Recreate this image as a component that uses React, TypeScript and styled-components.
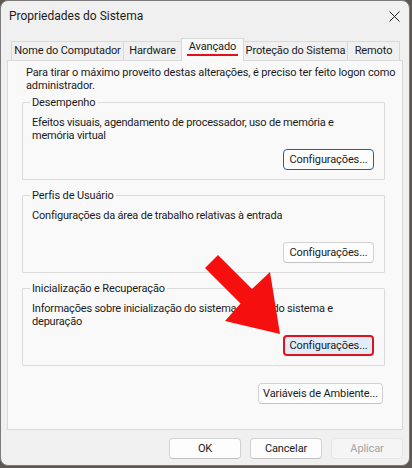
import styled, { createGlobalStyle } from 'styled-components'

const GlobalStyle = createGlobalStyle`
	html, body {
		margin: 0;
		padding: 0;
	}
	body {
		width: 412px;
		height: 468px;
		overflow: hidden;
		background: #5d5853;
		font-family: Roboto, 'Liberation Sans', sans-serif;
		font-size: 11px;
		letter-spacing: -0.12px;
		color: #1b1b1b;
	}
`

const Window = styled.div`
	position: relative;
	width: 410px;
	height: 466px;
	box-sizing: border-box;
	border: 1px solid #7b7b7b;
	border-radius: 8px;
	background: #f0f0f0;
	display: flex;
	flex-direction: column;
	overflow: hidden;
`

const TitleBar = styled.div`
	height: 30px;
	flex-shrink: 0;
	display: flex;
	align-items: center;
	justify-content: space-between;
	padding: 0 9px 0 8px;
`

const Title = styled.span`
	font-size: 12px;
	letter-spacing: 0;
	line-height: 14px;
`

const TabStrip = styled.div`
	height: 30px;
	flex-shrink: 0;
	display: flex;
	align-items: flex-end;
	padding-left: 11px;
	margin-bottom: -1px;
	position: relative;
	z-index: 1;
`

const Tab = styled.div<{ $w: number; $active?: boolean }>`
	width: ${(p) => p.$w}px;
	height: ${(p) => (p.$active ? 23 : 20)}px;
	box-sizing: border-box;
	margin-left: -1px;
	border: 1px solid #d9d9d9;
	border-bottom: ${(p) => (p.$active ? 'none' : '1px solid #d9d9d9')};
	background: ${(p) => (p.$active ? '#f9f9f9' : '#f0f0f0')};
	position: relative;
	z-index: ${(p) => (p.$active ? 2 : 1)};
	display: flex;
	justify-content: center;
	align-items: flex-start;
	padding-top: ${(p) => (p.$active ? 1 : 2)}px;
	line-height: 13px;
	white-space: nowrap;
`

const TabLabel = styled.span<{ $active?: boolean }>`
	display: inline-block;
	line-height: 13px;
	padding: 0 2px 1px;
	border-bottom: 2px solid ${(p) => (p.$active ? '#e3101c' : 'transparent')};
`

const Panel = styled.div`
	margin: 0 6px;
	height: 370px;
	flex-shrink: 0;
	box-sizing: border-box;
	border: 1px solid #d9d9d9;
	background: #f9f9f9;
	padding: 5px 17px 0 14px;
	display: flex;
	flex-direction: column;
`

const Intro = styled.p`
	margin: 0 -12px 0 0;
	padding-left: 4px;
	line-height: 13px;
`

const Group = styled.fieldset<{ $first?: boolean }>`
	margin: ${(p) => (p.$first ? 4 : 9)}px 0 0;
	padding: 0 10px 9px 9px;
	min-width: 0;
	border: 1px solid #dcdcdc;
	border-radius: 1px;
`

const Legend = styled.legend`
	padding: 0 2px;
	margin-left: -2px;
	line-height: 13px;
`

const Description = styled.p`
	margin: 7px 0 0;
	max-width: 330px;
	min-height: 26px;
	line-height: 13px;
	letter-spacing: -0.2px;
`

const ButtonRow = styled.div<{ $top: number; $right?: number }>`
	display: flex;
	justify-content: flex-end;
	margin-top: ${(p) => p.$top}px;
	padding-right: ${(p) => p.$right ?? 0}px;
`

type Variant = 'normal' | 'focus' | 'marked' | 'disabled'

const Button = styled.button<{ $w: number; $variant?: Variant }>`
	width: ${(p) => p.$w}px;
	height: 21px;
	box-sizing: border-box;
	padding: 0;
	border-radius: 4px;
	font-family: inherit;
	font-size: 11px;
	letter-spacing: inherit;
	line-height: 13px;
	white-space: nowrap;
	cursor: default;
	color: ${(p) => (p.$variant === 'disabled' ? '#a3a3a3' : '#1b1b1b')};
	background: ${(p) =>
		p.$variant === 'marked' ? '#e1eefa' : p.$variant === 'disabled' ? '#f5f5f5' : '#fdfdfd'};
	border: ${(p) =>
		p.$variant === 'focus'
			? '1px solid #24609c'
			: p.$variant === 'marked'
				? '2px solid #e0121e'
				: p.$variant === 'disabled'
					? '1px solid #e6e6e6'
					: '1px solid #d2d2d2'};
	border-bottom-color: ${(p) =>
		p.$variant === 'normal' || !p.$variant ? '#c2c2c2' : undefined};
`

const Footer = styled.div`
	display: flex;
	justify-content: flex-end;
	gap: 9px;
	padding: 8px 6px 0;
`

const Arrow = styled.svg`
	position: absolute;
	left: -1px;
	top: -1px;
	pointer-events: none;
	z-index: 5;
`

const CloseIcon = () => (
	<svg width="11" height="11" viewBox="0 0 11 11">
		<path d="M0.5 0.5 L10.5 10.5 M10.5 0.5 L0.5 10.5" stroke="#222" strokeWidth="1" fill="none" />
	</svg>
)

const tabs = [
	{ label: 'Nome do Computador', w: 113 },
	{ label: 'Hardware', w: 59 },
	{ label: 'Avançado', w: 63, active: true },
	{ label: 'Proteção do Sistema', w: 105 },
	{ label: 'Remoto', w: 53 },
]

export default function App() {
	return (
		<>
			<GlobalStyle />
			<Window>
				<TitleBar>
					<Title>Propriedades do Sistema</Title>
					<CloseIcon />
				</TitleBar>

				<TabStrip>
					{tabs.map((t) => (
						<Tab key={t.label} $w={t.w} $active={t.active}>
							<TabLabel $active={t.active}>{t.label}</TabLabel>
						</Tab>
					))}
				</TabStrip>

				<Panel>
					<Intro>
						Para tirar o máximo proveito destas alterações, é preciso ter feito logon como administrador.
					</Intro>

					<Group $first>
						<Legend>Desempenho</Legend>
						<Description>
							Efeitos visuais, agendamento de processador, uso de memória e memória virtual
						</Description>
						<ButtonRow $top={7}>
							<Button $w={91} $variant="focus">Configurações...</Button>
						</ButtonRow>
					</Group>

					<Group>
						<Legend>Perfis de Usuário</Legend>
						<Description>Configurações da área de trabalho relativas à entrada</Description>
						<ButtonRow $top={7}>
							<Button $w={91}>Configurações...</Button>
						</ButtonRow>
					</Group>

					<Group>
						<Legend>Inicialização e Recuperação</Legend>
						<Description>
							Informações sobre inicialização do sistema, falhas do sistema e depuração
						</Description>
						<ButtonRow $top={7}>
							<Button $w={91} $variant="marked">Configurações...</Button>
						</ButtonRow>
					</Group>

					<ButtonRow $top={17} $right={2}>
						<Button $w={125}>Variáveis de Ambiente...</Button>
					</ButtonRow>
				</Panel>

				<Footer>
					<Button $w={72}>OK</Button>
					<Button $w={72}>Cancelar</Button>
					<Button $w={72} $variant="disabled">Aplicar</Button>
				</Footer>

				<Arrow width="412" height="468" viewBox="0 0 412 468">
					<polygon
						points="218,255 252,289 270,272 280,334 225,321 240.5,303.5 205,268"
						fill="#f50f0f"
					/>
				</Arrow>
			</Window>
		</>
	)
}
